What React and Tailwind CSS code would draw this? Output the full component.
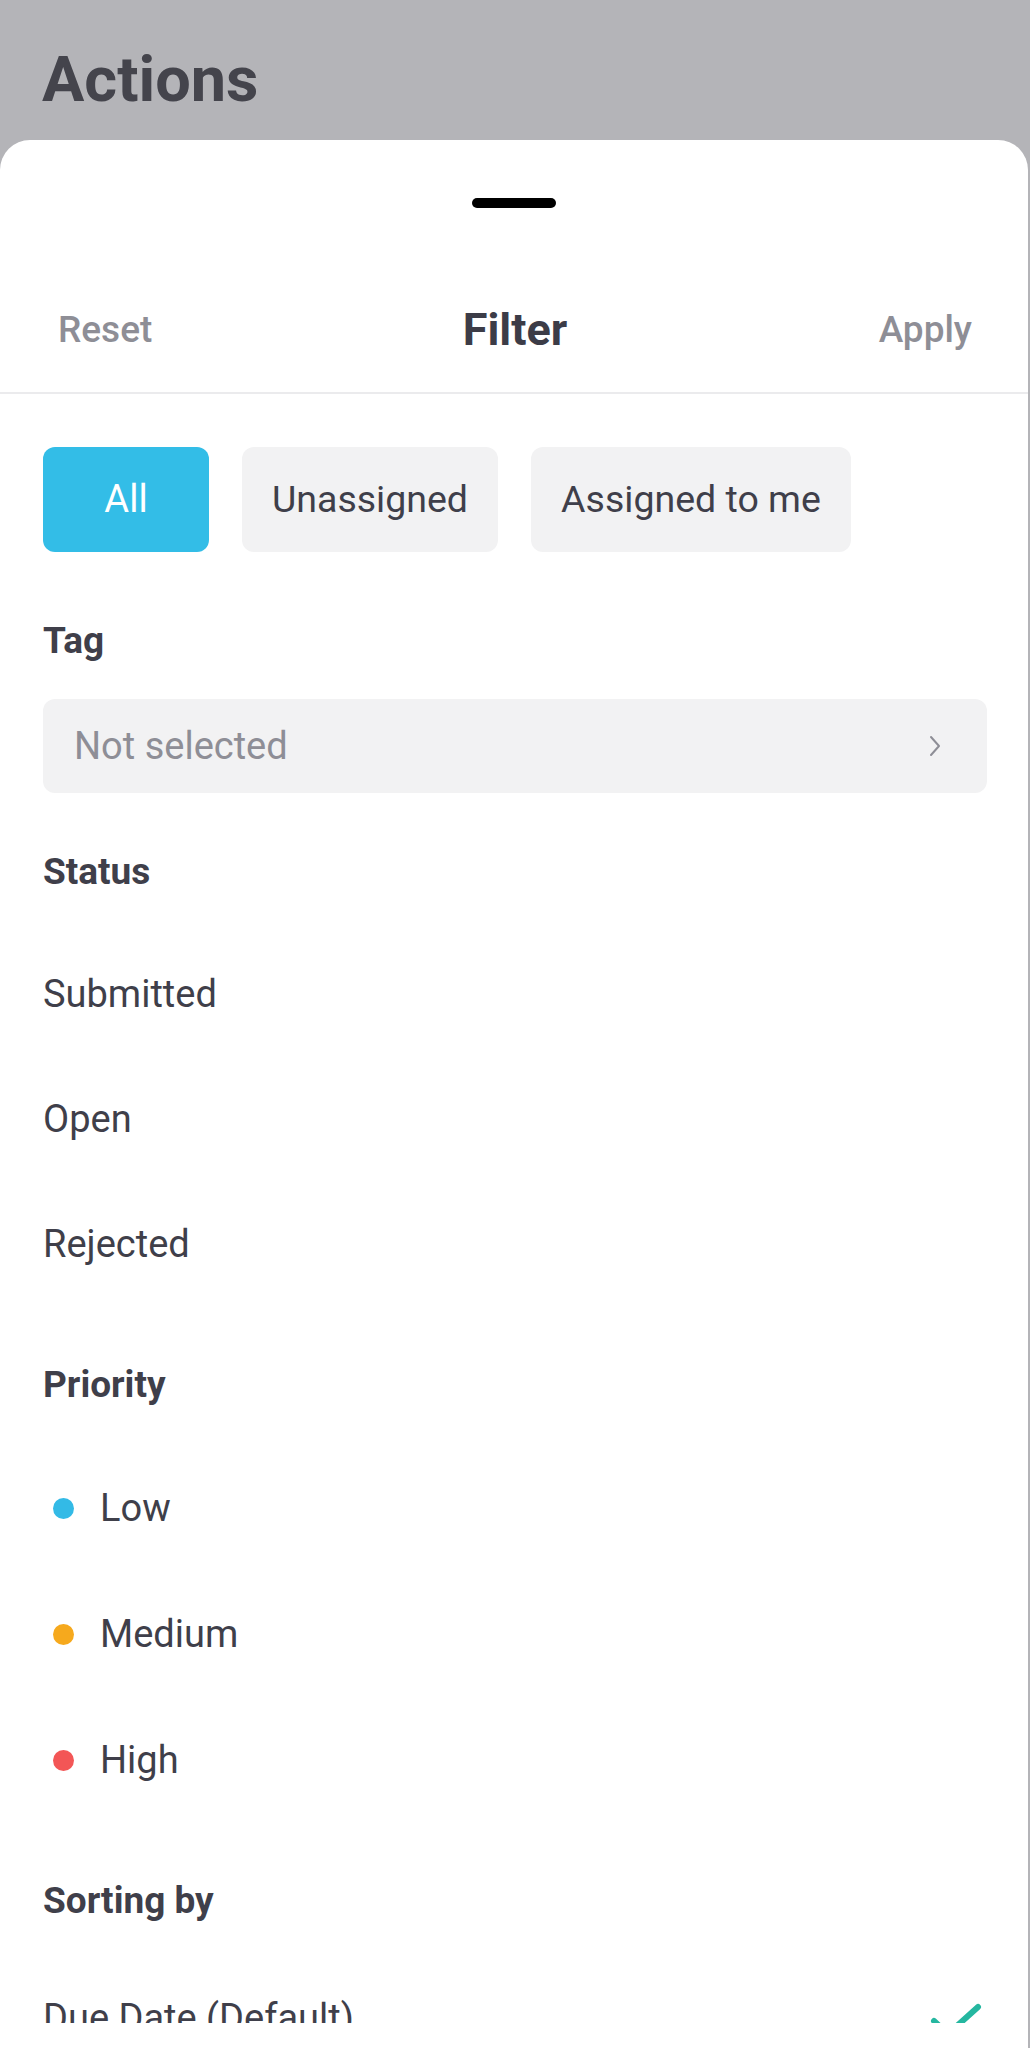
import React from "react";

function SectionLabel({ children, mt }) {
  return (
    <div className={`h-[50px] flex items-center px-[43px] text-[37px] font-bold text-[#3f3f4a] ${mt}`}>
      {children}
    </div>
  );
}

function Row({ children, dot, tall }) {
  return (
    <div className={`${tall ? "h-[126px]" : "h-[125px]"} flex items-center px-[43px] text-[38px] text-[#3f3f4a]`}>
      {dot && <span className={`w-[21px] h-[21px] rounded-full ml-[10px] mr-[26px] ${dot}`} />}
      <span>{children}</span>
    </div>
  );
}

export default function App() {
  return (
    <div className="w-[1030px] h-[2048px] bg-[#b4b4b8] overflow-hidden flex flex-col font-[Roboto,sans-serif]">
      <div className="h-[140px] shrink-0 pl-[42px] pt-[48px]">
        <div className="leading-[64px] text-[63px] font-bold text-[#44444c]">Actions</div>
      </div>
      <div className="flex-1 min-h-0 mr-[2px] bg-white rounded-t-[30px] flex flex-col overflow-hidden">
        <div className="pt-[58px] flex justify-center shrink-0">
          <div className="w-[84px] h-[10px] rounded-full bg-black" />
        </div>
        <div className="mt-[59px] h-[125px] shrink-0 grid grid-cols-3 items-center px-[58px] pr-[56px]">
          <span className="justify-self-start text-[37px] font-medium text-[#8e8e96]">Reset</span>
          <span className="justify-self-center text-[45px] font-bold text-[#3c3c47]">Filter</span>
          <span className="justify-self-end text-[37px] font-medium text-[#8e8e96]">Apply</span>
        </div>
        <div className="h-[2px] bg-[#ebebed] shrink-0" />
        <div className="flex-1 min-h-0 overflow-hidden">
          <div className="mt-[53px] h-[105px] flex gap-[33px] px-[43px]">
            <div className="w-[166px] h-full rounded-[12px] bg-[#33bde7] flex items-center justify-center text-[38px] text-white">All</div>
            <div className="w-[256px] h-full rounded-[12px] bg-[#f2f2f3] flex items-center justify-center text-[37.5px] text-[#3f3f4a]">Unassigned</div>
            <div className="w-[320px] h-full rounded-[12px] bg-[#f2f2f3] flex items-center justify-center text-[37.5px] text-[#3f3f4a]">Assigned to me</div>
          </div>
          <SectionLabel mt="mt-[64px]">Tag</SectionLabel>
          <div className="mt-[33px] mx-[43px] mr-[41px] h-[94px] rounded-[12px] bg-[#f2f2f3] flex items-center justify-between pl-[31px] pr-[45px]">
            <span className="text-[38px] text-[#8e8e96]">Not selected</span>
            <svg width="14" height="24" viewBox="0 0 14 24" fill="none">
              <path d="M3 3 L11 12 L3 21" stroke="#8e8e96" strokeWidth="2" strokeLinecap="round" strokeLinejoin="round" />
            </svg>
          </div>
          <SectionLabel mt="mt-[54px]">Status</SectionLabel>
          <div className="mt-[35px]">
            <Row>Submitted</Row>
            <Row>Open</Row>
            <Row>Rejected</Row>
          </div>
          <SectionLabel mt="mt-[53px]">Priority</SectionLabel>
          <div className="mt-[35px]">
            <Row tall dot="bg-[#33bae6]">Low</Row>
            <Row tall dot="bg-[#f6a91d]">Medium</Row>
            <Row tall dot="bg-[#f35656]">High</Row>
          </div>
          <SectionLabel mt="mt-[53px]">Sorting by</SectionLabel>
          <div className="mt-[30px] h-[125px] flex items-center justify-between pl-[43px] pr-[46px] text-[38px] text-[#3f3f4a]">
            <span>Due Date (Default)</span>
            <svg width="52" height="40" viewBox="0 0 52 40" fill="none">
              <path d="M4 22 L18 35 L48 8" stroke="#25b7a0" strokeWidth="6" strokeLinecap="round" strokeLinejoin="round" />
            </svg>
          </div>
        </div>
        <div className="h-[25px] shrink-0 bg-white" />
      </div>
    </div>
  );
}
